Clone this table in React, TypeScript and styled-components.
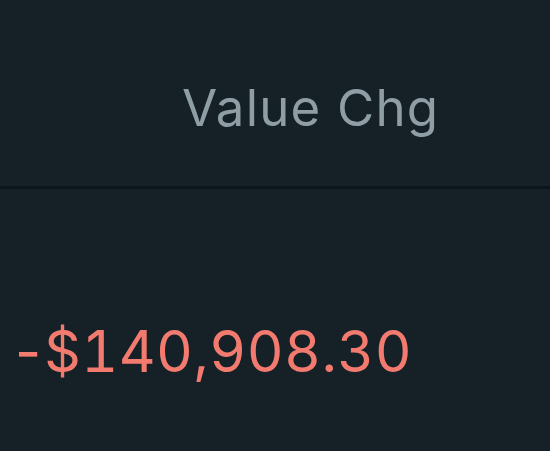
import React from 'react';
import { styled, createGlobalStyle } from 'styled-components';

const GlobalStyle = createGlobalStyle`
  html, body {
    margin: 0;
    padding: 0;
    background: #152126;
  }
  body {
    font-family: 'Inter', 'Liberation Sans', sans-serif;
  }
`;

const Table = styled.div`
  width: 550px;
  height: 451px;
  background: #152126;
  display: flex;
  flex-direction: column;
`;

const HeaderRow = styled.div`
  height: 189px;
  display: flex;
  align-items: flex-end;
  padding: 0 0 53px 182px;
  box-sizing: border-box;
  border-bottom: 3px solid #0b151a;
`;

const HeaderCell = styled.div`
  color: #8f9da5;
  font-size: 51px;
  font-weight: 400;
  line-height: 1;
  letter-spacing: 1.2px;
  white-space: nowrap;
`;

const BodyRow = styled.div`
  display: flex;
  align-items: flex-end;
  height: 191px;
  padding: 0 0 0 15px;
  box-sizing: border-box;
`;

const ValueCell = styled.div<{ $negative?: boolean }>`
  color: ${({ $negative }) => ($negative ? '#f27a6f' : '#4fd18b')};
  font-size: 57px;
  font-weight: 400;
  line-height: 1;
  font-variant-numeric: tabular-nums;
  letter-spacing: 0.45px;
  white-space: nowrap;
`;

const Sign = styled.span`
  font-variant-numeric: normal;
  letter-spacing: 0;
  margin-right: 3px;
`;

export default function App() {
  return (
    <>
      <GlobalStyle />
      <Table>
        <HeaderRow>
          <HeaderCell>Value Chg</HeaderCell>
        </HeaderRow>
        <BodyRow>
          <ValueCell $negative>
            <Sign>-</Sign>$140,908.30
          </ValueCell>
        </BodyRow>
      </Table>
    </>
  );
}
